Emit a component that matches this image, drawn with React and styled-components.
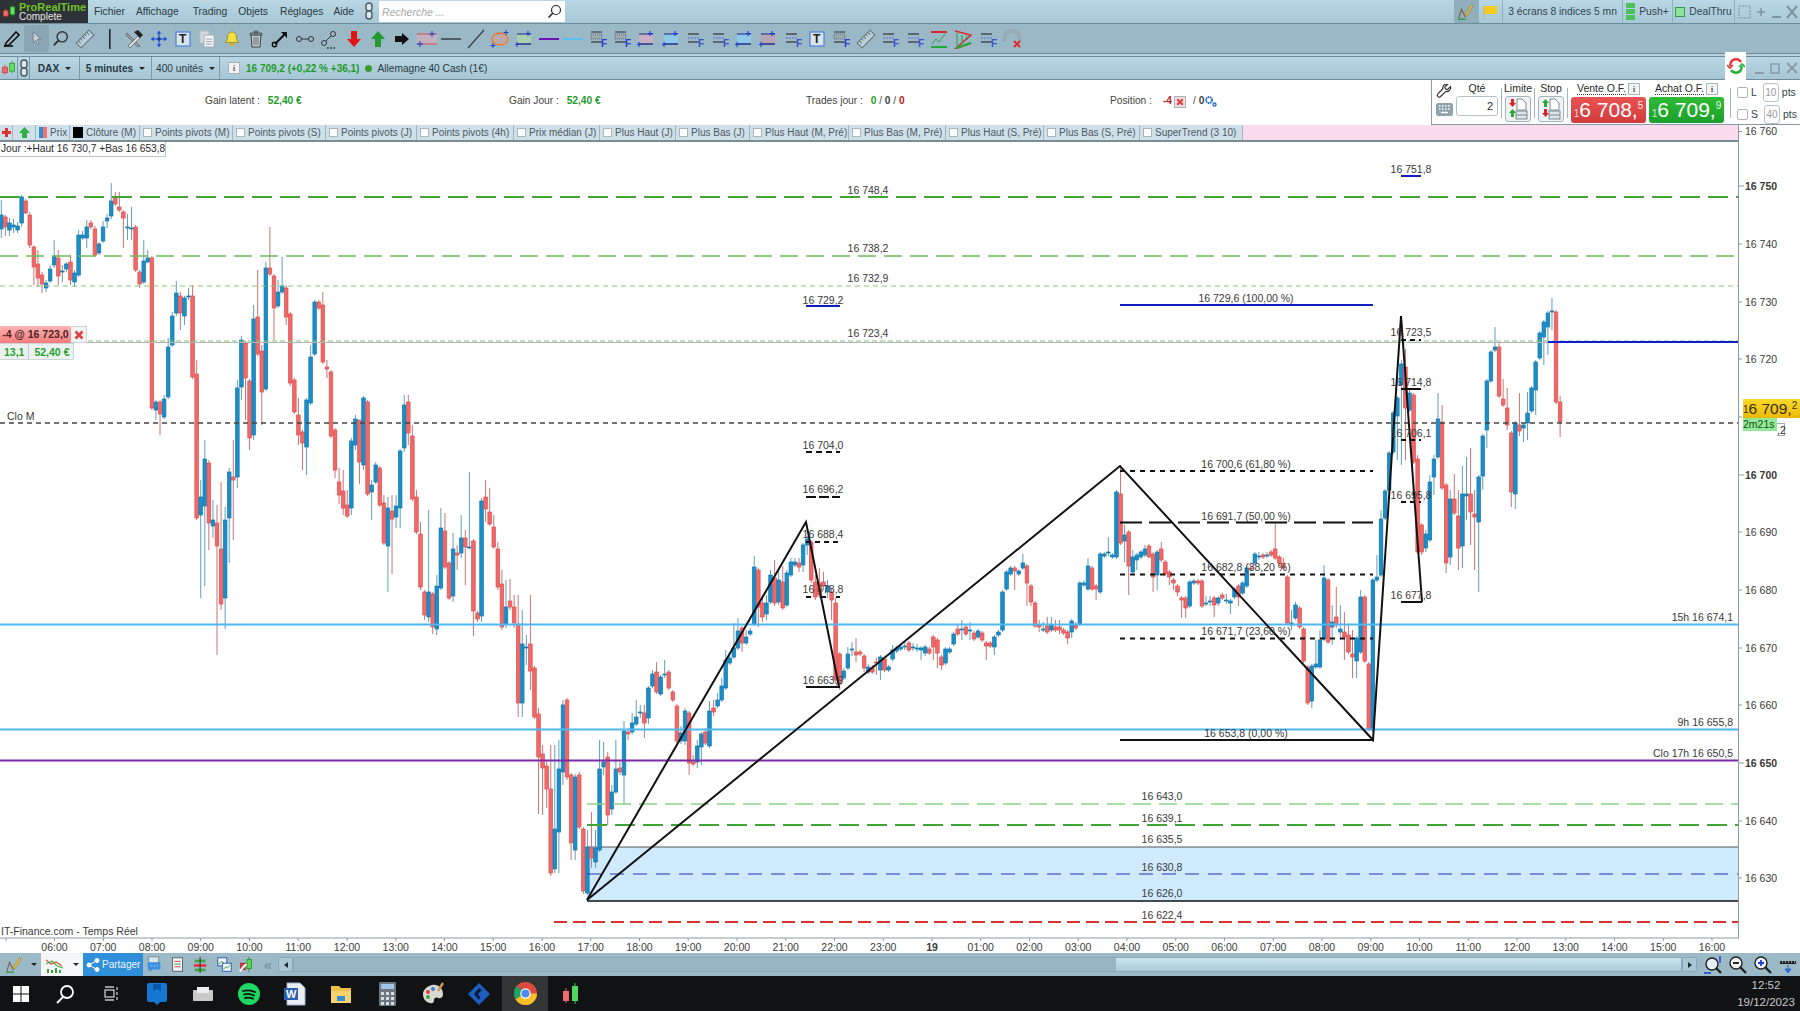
import React from 'react';
import styled, { createGlobalStyle } from 'styled-components';

const GlobalStyle = createGlobalStyle`
    html, body {
        margin: 0;
        padding: 0;
        background: #fff;
        overflow: hidden;
    }
    body {
        font-family: "Liberation Sans", Arial, sans-serif;
        font-size: 11px;
        color: #2a2a2a;
    }
`;

const Page = styled.div`
    width: 1800px;
    height: 1011px;
    display: flex;
    flex-direction: column;
    overflow: hidden;
`;

/////////////// top menu

const MenuBar = styled.div`
    height: 23px;
    flex: none;
    display: flex;
    align-items: center;
    background: linear-gradient(#b9d7e4, #a6c8d7);
    border-bottom: 1px solid #6f8b99;
    color: #2b3a42;
`;

const Logo = styled.div`
    width: 88px;
    height: 23px;
    background: #2d3236;
    display: flex;
    align-items: center;
    gap: 2px;
    padding-left: 2px;
    box-sizing: border-box;
    line-height: 10px;
    .name { color: #6fc02c; font-weight: bold; font-size: 11px; }
    .sub { color: #e8e8e8; font-size: 10px; }
`;

const MenuItem = styled.div`
    margin-left: ${p => p.$ml}px;
    font-size: 10.3px;
`;

const SearchBox = styled.div`
    width: 186px;
    height: 21px;
    background: #fff;
    display: flex;
    align-items: center;
    justify-content: space-between;
    padding: 0 3px;
    box-sizing: border-box;
    color: #aaa;
    font-style: italic;
    font-size: 10.5px;
`;

const Spacer = styled.div`
    flex: 1;
`;

const RightCell = styled.div`
    height: 23px;
    display: flex;
    align-items: center;
    gap: 4px;
    width: ${p => p.$w}px;
    justify-content: center;
    box-sizing: border-box;
    border-right: 1px solid #8fb0bf;
    background: ${p => p.$dark ? '#91aebc' : 'transparent'};
    font-size: 10.3px;
    color: #33444c;
`;

/////////////// toolbar

const ToolBar = styled.div`
    height: 29px;
    flex: none;
    display: flex;
    align-items: center;
    background: #9bb8c6;
    border-bottom: 1px solid #6f8b99;
`;

const ToolSlot = styled.div`
    width: 24.4px;
    height: 27px;
    flex: none;
    display: flex;
    align-items: center;
    justify-content: center;
    border-radius: 2px;
    background: ${p => p.$active ? '#8aa5b3' : 'transparent'};
`;

const Strip = styled.div`
    height: 2px;
    flex: none;
    background: #b8d3df;
`;

/////////////// chart title

const TitleBar = styled.div`
    height: 24px;
    flex: none;
    display: flex;
    align-items: center;
    box-sizing: border-box;
    background: linear-gradient(#b9d7e4, #a4c6d5);
    border-top: 1px solid #6f8b99;
    border-bottom: 1px solid #6f8b99;
    font-size: 10.2px;
    color: #2b3a42;
`;

const TitleCell = styled.div`
    width: ${p => p.$w}px;
    height: 22px;
    flex: none;
    display: flex;
    align-items: center;
    justify-content: center;
    gap: 6px;
    box-sizing: border-box;
    border-right: 1px solid #7e9aa8;
    font-weight: ${p => p.$bold ? 'bold' : 'normal'};
`;

const Caret = styled.span`
    width: 0;
    height: 0;
    border-left: 3px solid transparent;
    border-right: 3px solid transparent;
    border-top: 3px solid #222;
`;

const InfoBox = styled.span`
    width: ${p => p.$s || 10}px;
    height: ${p => p.$s || 10}px;
    border: 1px solid #a8b4ba;
    background: #f2f4f5;
    color: #666;
    font: bold 9px "Liberation Serif", serif;
    display: inline-flex;
    align-items: center;
    justify-content: center;
    flex: none;
`;

const Quote = styled.div`
    color: #1f9a2a;
    font-weight: bold;
    margin-left: 6px;
    font-size: 10px;
`;

const GreenDot = styled.span`
    width: 7px;
    height: 7px;
    border-radius: 50%;
    background: #3b9c2c;
    margin: 0 5px 0 6px;
`;

const RefreshTab = styled.div`
    width: 21px;
    height: 28px;
    margin-top: -5px;
    background: #fff;
    display: flex;
    align-items: center;
    justify-content: center;
    position: relative;
`;

const WinControls = styled.div`
    display: flex;
    align-items: center;
    gap: 4px;
    margin-left: 8px;
    color: #8a9ba4;
`;

/////////////// order panel

const OrderPanel = styled.div`
    height: 45px;
    flex: none;
    display: flex;
    background: #fff;
`;

const Stats = styled.div`
    width: 1431px;
    flex: none;
    padding: 15px 0 0 205px;
    box-sizing: border-box;
    display: flex;
    font-size: 10.2px;
    color: #444;
`;

const Stat = styled.div`
    width: ${p => p.$w}px;
    flex: none;
    b { margin-left: 5px; }
`;

const PositionStat = styled(Stat)`
    display: flex;
    align-items: flex-start;
`;

const Good = styled.b`
    color: #1f9a2a;
    font-weight: bold;
`;

const Bad = styled.b`
    color: #b52222;
    font-weight: bold;
`;

const TradeBox = styled.div`
    flex: 1;
    border-left: 1px solid #8a9ba4;
    border-bottom: 1px solid #8a9ba4;
    display: flex;
    box-sizing: border-box;
    padding-left: 3px;
    font-size: 10.5px;
`;

const ToolsCol = styled.div`
    width: 18px;
    margin-right: 3px;
    display: flex;
    flex-direction: column;
    align-items: center;
    gap: 2px;
    padding-top: 4px;
`;

const Keyboard = styled.div`
    width: 17px;
    height: 13px;
    background: #8fa3ad;
    border-radius: 2px;
    display: flex;
    align-items: center;
    justify-content: center;
`;

const FieldCol = styled.div`
    width: ${p => p.$w}px;
    flex: none;
    display: flex;
    flex-direction: column;
    align-items: center;
    gap: 2px;
    padding-top: 2px;
    box-sizing: border-box;
`;

const Qty = styled.div`
    width: 42px;
    height: 20px;
    border: 1px solid #b5c2c9;
    border-radius: 3px;
    box-sizing: border-box;
    text-align: right;
    padding: 3px 4px 0 0;
    font-size: 11px;
`;

const OrderBtn = styled.div`
    width: 26px;
    height: 26px;
    border: 1px solid #a5b4bc;
    border-radius: 3px;
    background: #f0f4f6;
    box-sizing: border-box;
    display: flex;
    align-items: center;
    justify-content: center;
`;

const VSep = styled.div`
    width: 1px;
    height: 30px;
    margin: 8px 3px 0 3px;
    background: #a8b4ba;
    flex: none;
`;

const PriceCol = styled.div`
    width: 75px;
    margin-right: 3px;
    flex: none;
    display: flex;
    flex-direction: column;
    align-items: center;
`;

const PriceHead = styled.div`
    height: 17px;
    display: flex;
    align-items: center;
    gap: 2px;
    white-space: nowrap;
    span:first-child { border-bottom: 1px dotted #333; }
`;

const PriceBtn = styled.div`
    width: 75px;
    height: 26px;
    border-radius: 3px;
    background: ${p => p.$sell ? 'linear-gradient(#ea5353, #cf3b3b)' : 'linear-gradient(#2fbb35, #1c9f2b)'};
    color: #fff;
    display: flex;
    align-items: center;
    justify-content: center;
    white-space: nowrap;
    font-size: 21px;
    line-height: 26px;
    small { font-size: 10px; opacity: .75; align-self: flex-end; line-height: 18px; }
    sup { font-size: 10px; opacity: .9; line-height: 10px; align-self: flex-start; margin-top: 4px; }
`;

const SideCol = styled.div`
    display: flex;
    flex-direction: column;
    margin-left: 3px;
    gap: 2px;
    padding-top: 2px;
`;

const SideRow = styled.div`
    display: flex;
    align-items: center;
    gap: 3px;
    height: 20px;
    color: #33444c;
`;

const Check = styled.span`
    width: ${p => p.$s || 10}px;
    height: ${p => p.$s || 10}px;
    border: 1px solid ${p => p.$c || '#aab5bb'};
    border-radius: ${p => p.$r || 0}px;
    background: ${p => p.$bg || '#fff'};
    flex: none;
    box-sizing: border-box;
`;

const PtsBox = styled.span`
    width: 16px;
    height: 19px;
    border: 1px solid #b5c2c9;
    border-radius: 3px;
    box-sizing: border-box;
    display: flex;
    align-items: center;
    justify-content: center;
    color: #999;
    font-size: 10px;
    margin-left: 3px;
`;

/////////////// indicators row

const IndicatorBar = styled.div`
    height: 17px;
    flex: 1;
    display: flex;
    box-sizing: border-box;
    border-bottom: 2px solid #7b8c95;
    background: #fbdcee;
`;

const IndCell = styled.div`
    width: ${p => p.$w}px;
    flex: none;
    display: flex;
    align-items: center;
    gap: 3px;
    padding-left: ${p => p.$pl ?? 3}px;
    box-sizing: border-box;
    background: #cfe0ea;
    border-right: 1px solid #9fb4c0;
    color: #4e5a61;
    font-size: 10px;
    white-space: nowrap;
    overflow: hidden;
`;

const ColorSwatch = styled.span`
    width: ${p => p.$w || 10}px;
    height: 11px;
    flex: none;
    background: ${p => p.$bg};
`;

const AxisEdge = styled.div`
    width: 62px;
    height: 17px;
    flex: none;
    box-sizing: border-box;
    border-left: 1px solid #8a9ba4;
    display: flex;
    gap: 3px;
    line-height: 12px;
    font-size: 10.5px;
    color: #3a3a3a;
    i {
        width: 3px;
        height: 1px;
        margin-top: 6px;
        background: #8a9ba4;
    }
`;

const IndRow = styled.div`
    display: flex;
    height: 17px;
    flex: none;
`;

/////////////// chart

const ChartArea = styled.div`
    height: 811px;
    flex: none;
    position: relative;
    background: #fff;
`;

const ChartSvg = styled.svg`
    display: block;
    width: 1800px;
    height: 811px;
`;

const ChartText = styled.text`
    font-family: "Liberation Sans", Arial, sans-serif;
    font-size: 10.5px;
    fill: ${p => p.$c || '#3a3a3a'};
    font-weight: ${p => p.$bold ? 'bold' : 'normal'};
`;

const JourLabel = styled.div`
    position: absolute;
    top: 0;
    left: 0;
    width: 166px;
    height: 15px;
    box-sizing: border-box;
    border: 1px solid #b8c4ca;
    border-width: 0 1px 1px 0;
    background: #fff;
    font-size: 10.2px;
    line-height: 14px;
    padding-left: 1px;
    white-space: nowrap;
`;

const PositionTag = styled.div`
    position: absolute;
    top: 184px;
    left: 0;
    display: flex;
    height: 17px;
    font-size: 10.5px;
    font-weight: bold;
    line-height: 17px;
    color: #4a2222;
    .qty {
        width: 71px;
        background: linear-gradient(#ffb3b3, #f47c7c);
        text-align: center;
        border-radius: 0 2px 2px 0;
    }
    .close {
        width: 16px;
        background: #f1f3f4;
        border: 1px solid #ccd4d8;
        border-left: 0;
        box-sizing: border-box;
        display: flex;
        align-items: center;
        justify-content: center;
    }
`;

const PositionGain = styled.div`
    position: absolute;
    top: 201px;
    left: 0;
    display: flex;
    height: 17px;
    line-height: 16px;
    font-size: 10.5px;
    font-weight: bold;
    color: #22a32c;
    background: #eef1f2;
    border: 1px solid #ccd4d8;
    border-left: 0;
    border-radius: 0 0 2px 0;
    box-sizing: border-box;
    span { padding: 0 4px; }
    span + span { border-left: 1px solid #c4ccd0; padding: 0 4px 0 5px; }
`;

const LastPrice = styled.div`
    position: absolute;
    top: 257px;
    left: 1743px;
    width: 57px;
    height: 19px;
    background: linear-gradient(#f8d92a, #ecb90a);
    color: #3a3000;
    display: flex;
    align-items: center;
    white-space: nowrap;
    font-size: 15.5px;
    line-height: 19px;
    z-index: 2;
    small { font-size: 10px; align-self: flex-end; line-height: 16px; }
    sup { font-size: 10px; line-height: 10px; align-self: flex-start; margin-top: 2px; }
`;

const Countdown = styled.div`
    position: absolute;
    top: 276px;
    left: 1743px;
    width: 34px;
    height: 13px;
    background: #93ea96;
    color: #1a4a20;
    font-size: 10.5px;
    line-height: 12px;
    overflow: hidden;
    z-index: 2;
`;

const GhostPrice = styled.div`
    position: absolute;
    top: 281px;
    left: 1777px;
    width: 8px;
    height: 13px;
    box-sizing: border-box;
    border: 1px solid #9fb0ba;
    border-left: 0;
    text-align: right;
    font-size: 10.5px;
    line-height: 12px;
`;

/////////////// bottom bar

const BottomBar = styled.div`
    height: 23px;
    flex: none;
    display: flex;
    align-items: center;
    background: #9cb9c7;
`;

const BottomCell = styled.div`
    width: ${p => p.$w}px;
    height: 23px;
    flex: none;
    display: flex;
    align-items: center;
    justify-content: center;
    background: ${p => p.$bg || 'transparent'};
    margin-left: ${p => p.$ml || 0}px;
    color: #6e8694;
    font-size: 14px;
`;

const ShareBtn = styled.div`
    width: 60px;
    height: 23px;
    flex: none;
    display: flex;
    align-items: center;
    gap: 2px;
    padding-left: 3px;
    box-sizing: border-box;
    background: #2f8fd8;
    color: #e8f4fc;
    font-size: 10px;
`;

const Track = styled.div`
    flex: 1;
    height: 15px;
    display: flex;
    box-sizing: border-box;
    background: #98b5c3;
    border: 1px solid #8ca9b7;
    border-radius: 2px;
`;

const Thumb = styled.div`
    width: 565px;
    margin-left: auto;
    background: linear-gradient(#cbe3ee, #a9ccda);
`;

const ScrollBtn = styled.div`
    width: 15px;
    height: 15px;
    flex: none;
    background: #a9c6d4;
    border: 1px solid #8ca9b7;
    box-sizing: border-box;
    border-radius: 2px;
    display: flex;
    align-items: center;
    justify-content: center;
`;

const Arrow = styled.span`
    width: 0;
    height: 0;
    border-top: 3px solid transparent;
    border-bottom: 3px solid transparent;
    border-${p => p.$dir}: 4px solid #1d2a30;
`;

const TaskBar = styled.div`
    height: 35px;
    flex: none;
    background: #111213;
    display: flex;
    align-items: center;
`;

const TaskTile = styled.div`
    width: ${p => p.$w || 46}px;
    height: 35px;
    flex: none;
    display: flex;
    align-items: center;
    justify-content: center;
    background: ${p => p.$on ? '#343536' : 'transparent'};
`;

const Clock = styled.div`
    margin-left: auto;
    width: 62px;
    text-align: center;
    color: #c9c9c9;
    font-size: 11.5px;
    line-height: 17px;
    padding-right: 3px;
`;

/////////////// data

const CANDLE_DATA = `
b215,229,200,238 r217,227,215,236 b223,230,218,236 b225,227,219,233 b226,230,222,233 b197,223,195,227 r201,213,199,214 r215,245,212,248 r247,267,245,285 r264,278,250,287
r275,284,272,293 b283,288,280,292 b269,281,265,283 b256,265,240,268 r258,276,250,285 b271,271,265,282 b264,269,262,272 r262,280,255,285 b273,282,270,287 b235,275,230,277
b235,238,231,240 b227,238,220,248 r223,227,220,229 r229,255,226,257 b244,253,242,255 b227,241,221,243 b218,221,214,228 b201,216,183,219 r197,204,192,206 r207,210,192,212
r212,218,210,248 b227,227,214,240 b228,228,207,240 r227,270,225,272 r272,284,270,288 b261,282,240,284 b258,262,250,263 r258,408,256,410 b402,410,400,420 r402,414,400,435
b399,417,395,419 b347,397,338,399 b316,345,312,347 b293,313,281,316 r296,313,292,330 b298,316,296,325 b296,296,288,300 r296,377,285,379 r374,518,360,520 b497,515,480,598
b459,506,440,586 r463,523,460,550 b520,526,500,538 r523,546,505,655 r549,604,482,610 b520,598,507,629 b472,518,468,563 r477,480,440,540 b388,477,380,488 b340,387,336,400
r343,378,341,420 r381,438,379,450 b319,435,305,440 r317,354,270,356 r351,392,345,425 b268,389,262,391 r268,274,227,276 r276,308,274,340 b292,306,280,308 b286,292,257,294
r288,317,285,325 r314,383,312,386 r380,412,378,414 r415,435,398,445 r432,443,430,470 b400,447,398,475 b357,403,345,405 b302,354,300,356 r302,308,300,310 r305,362,292,364
r367,369,360,378 r372,436,370,438 r430,470,428,478 r482,495,468,504 r491,508,470,515 r505,516,490,518 b441,508,438,515 b419,445,415,450 r420,462,440,484 b398,465,396,470
r402,494,400,496 b485,492,480,520 b465,482,462,484 r468,505,466,507 r503,543,495,545 b508,546,497,592 r511,519,495,574 b506,517,495,528 b451,508,449,528 b405,448,395,452
r402,433,395,445 r436,499,425,501 r497,532,490,534 r534,587,522,590 r592,615,590,620 b592,617,510,622 r594,627,592,634 b586,629,575,635 b528,588,508,590 r531,567,513,569
r563,598,561,600 b549,596,533,602 r553,555,545,570 b538,553,515,558 r538,547,530,585 b547,547,472,549 r541,611,539,636 r613,619,611,622 b501,616,498,622 r497,509,480,522
r512,524,488,526 r527,547,515,549 r549,587,542,590 r584,627,570,630 b607,624,580,628 r601,607,579,610 r607,623,595,628 r624,703,595,717 b644,703,610,717 b647,647,635,665
r644,671,595,690 r668,717,666,719 r714,757,708,814 r754,768,745,815 r766,789,760,808 r789,873,745,876 b829,869,745,873 b769,832,740,873 b705,772,700,785 r700,777,698,780
r775,843,773,860 b777,850,774,860 r775,827,772,829 r829,891,827,894 b847,893,830,895 r848,858,812,868 b848,862,830,868 b769,850,740,852 b762,767,742,775 r757,815,752,825
b792,809,785,815 b769,792,740,794 r768,772,762,775 b731,775,721,805 r732,734,728,740 b723,732,713,734 b717,724,700,726 b712,712,705,718 r713,723,705,738 b688,718,686,724
b674,686,670,688 r672,692,662,694 b677,694,675,696 b674,674,660,678 r672,688,670,690 r692,700,690,702 r706,741,704,743 b733,741,726,744 b711,741,708,745 r713,763,711,775
r762,764,755,766 b746,762,740,768 b734,747,732,765 r732,743,728,745 b711,746,701,748 r708,712,700,716 b700,706,693,708 b686,700,678,702 b660,688,650,690 b658,663,655,665
b648,657,623,659 b631,648,618,650 r628,643,626,652 b637,643,630,645 b631,634,628,636 b567,624,556,626 r570,607,568,627 r603,617,598,622 b603,614,595,620 b575,602,570,604
r578,603,560,606 b580,602,568,605 r582,608,566,610 b573,605,570,607 b562,575,558,577 b562,565,558,567 r563,567,558,572 b545,565,543,572 b539,545,536,555 r542,580,540,583
r582,597,575,600 r583,595,568,598 r582,586,572,590 b586,592,580,598 r592,600,588,620 r603,680,598,683 r654,684,652,690 b671,678,668,680 b654,668,647,670 b649,649,642,656
r652,655,638,662 r652,654,650,656 r656,668,654,672 b667,672,664,674 r668,672,665,674 r662,663,658,675 b657,670,655,680 r659,670,657,672 b667,670,665,672 b650,659,645,661
b648,651,646,653 b647,649,645,651 b646,646,642,650 r643,650,641,652 b647,647,643,651 b648,648,644,652 b648,650,646,660 b647,653,645,656 r649,653,647,655 r637,647,635,660
r640,653,638,668 r657,665,655,670 b649,663,647,665 b649,652,647,654 b634,644,632,646 r629,634,625,636 b629,629,620,640 r627,634,625,636 b630,630,622,640 r633,639,631,641
b631,637,629,639 r633,640,631,642 r643,646,641,660 r643,646,641,648 b637,647,635,655 b632,635,630,637 b592,630,590,632 b572,589,570,591 b568,574,566,576 r568,571,566,590
b571,574,569,576 b563,568,554,570 r566,583,564,606 r586,602,584,606 r603,626,601,628 r625,627,620,632 b629,629,622,632 r626,632,617,634 b625,630,617,632 r627,630,620,632
r627,630,620,634 r630,633,628,635 r632,638,630,644 b621,632,619,638 r625,628,622,630 b583,624,581,626 b583,585,580,587 b566,589,558,591 r568,589,566,591 r586,589,584,600
b554,592,552,594 b554,556,552,558 b552,552,537,556 b555,557,553,559 b492,557,490,559 r494,543,465,545 b535,541,525,562 r532,566,530,595 b557,572,550,574 b555,560,553,570
b552,557,550,559 b549,555,545,557 r546,557,544,558 r554,577,552,592 b552,575,550,590 r549,560,542,562 r562,574,560,576 r572,577,570,585 r580,583,578,590 r586,592,584,596
r598,600,596,618 r598,608,596,618 b582,606,580,608 b581,583,579,585 r581,583,579,585 r581,606,579,608 b603,603,596,606 b601,601,596,606 r598,605,596,617 b598,603,596,606
r595,598,593,600 b600,600,594,604 b601,603,599,614 b589,597,587,599 r586,597,584,606 b583,593,581,595 b568,586,566,588 r568,569,564,571 b554,563,552,565 b556,556,552,560
r555,557,553,559 b555,555,552,558 r552,555,550,557 r549,558,523,560 r557,563,555,566 r563,568,558,570 r577,623,575,625 b623,625,610,630 b605,618,602,620 r608,627,606,629
r629,661,627,663 r667,703,665,705 b666,701,664,708 b664,667,640,669 b640,667,630,669 b578,639,565,641 r580,642,578,644 b622,627,605,645 r617,625,587,628 b629,632,605,640
r632,637,612,660 r635,652,625,654 r654,657,630,678 b638,661,636,678 b597,652,590,654 r597,661,595,663 r664,729,662,731 b580,730,578,732 b577,580,555,582 b519,575,510,577
b491,518,489,520 b453,490,451,492 b413,452,411,454 b398,416,396,460 b364,385,360,465 r367,408,349,460 b393,410,388,412 r395,462,393,464 r459,552,455,554 r525,552,523,555
b534,548,530,552 b482,540,475,542 b459,477,455,495 b419,457,393,459 r422,488,405,490 r485,563,483,573 b499,557,490,565 r499,513,474,515 r516,548,490,570 b494,546,466,568
b494,496,457,520 r494,512,448,545 r514,517,490,570 b477,522,475,592 b436,476,434,490 b381,430,379,448 b352,381,350,383 b347,350,327,352 r347,396,342,398 r399,405,379,407
r408,425,388,430 r433,492,431,507 b423,494,421,509 r425,431,393,436 b425,428,423,442 b413,423,392,440 b388,411,386,413 b362,390,360,415 b333,358,331,360 b322,337,320,365
b313,327,311,355 b311,311,298,330 r312,402,310,404 r402,422,396,437
`;

const CANDLES = CANDLE_DATA.trim().split(/\s+/).map((tok, i) => {
    const [top, bottom, high, low] = tok.slice(1).split(',').map(Number);
    return { up: tok[0] === 'b', top, bottom, high, low, x: 1.3 + i * 4.07 };
});

const HLINES = [
    { y: 197, x1: 0, x2: 1738, color: '#3fa535', w: 2, dash: '20 8' },
    { y: 256, x1: 0, x2: 1738, color: '#6dbb5c', w: 1.4, dash: '18 8' },
    { y: 286, x1: 0, x2: 1738, color: '#82c873', w: 1.2, dash: '5 4' },
    { y: 342.5, x1: 0, x2: 1738, color: '#b5b5b5', w: 1 },
    { y: 341, x1: 88, x2: 1738, color: '#82c873', w: 1.2, dash: '5 3' },
    { y: 423, x1: 0, x2: 1738, color: '#444', w: 1.3, dash: '5 4' },
    { y: 624.5, x1: 0, x2: 1738, color: '#4db8f2', w: 2 },
    { y: 729.5, x1: 0, x2: 1738, color: '#4db8f2', w: 2 },
    { y: 760.5, x1: 0, x2: 1738, color: '#7c2aa5', w: 2 },
    { y: 804, x1: 587, x2: 1738, color: '#8fd18a', w: 1.4, dash: '18 8' },
    { y: 825, x1: 587, x2: 1738, color: '#3fa535', w: 2, dash: '20 8' },
    { y: 874, x1: 587, x2: 1738, color: '#2233b5', w: 1.2, dash: '14 9' },
    { y: 922, x1: 554, x2: 1738, color: '#d63333', w: 2, dash: '13 6' },
    { y: 342, x1: 1548, x2: 1738, color: '#1020d0', w: 2 },
    // retracement lines
    { y: 305, x1: 1120, x2: 1373, color: '#1020c0', w: 2 },
    { y: 471, x1: 1120, x2: 1373, color: '#111', w: 2, dash: '5 5' },
    { y: 522.5, x1: 1120, x2: 1373, color: '#111', w: 2, dash: '22 7' },
    { y: 574.5, x1: 1120, x2: 1373, color: '#111', w: 2, dash: '5 5' },
    { y: 638.5, x1: 1120, x2: 1373, color: '#111', w: 2, dash: '5 5' },
    { y: 740, x1: 1120, x2: 1373, color: '#111', w: 2 },
    // short levels
    { y: 306, x1: 806, x2: 840, color: '#1020c0', w: 2 },
    { y: 452, x1: 806, x2: 840, color: '#111', w: 2, dash: '6 4' },
    { y: 497, x1: 806, x2: 840, color: '#111', w: 2, dash: '10 3' },
    { y: 542, x1: 806, x2: 840, color: '#111', w: 2, dash: '5 4' },
    { y: 597, x1: 806, x2: 840, color: '#111', w: 2, dash: '5 10' },
    { y: 687, x1: 806, x2: 840, color: '#111', w: 2 },
    { y: 176, x1: 1401, x2: 1421, color: '#1020c0', w: 2 },
    { y: 340, x1: 1401, x2: 1421, color: '#111', w: 2, dash: '5 4' },
    { y: 389, x1: 1401, x2: 1421, color: '#111', w: 2 },
    { y: 440, x1: 1401, x2: 1421, color: '#111', w: 2, dash: '5 4' },
    { y: 502, x1: 1401, x2: 1421, color: '#111', w: 2, dash: '5 4' },
    { y: 602, x1: 1401, x2: 1422, color: '#111', w: 2 },
];

const ZIGZAG = [
    '587,900 806,522 839,687',
    '587,900 1120,466 1373,740 1401,316 1422,602',
];

const LABELS = [
    // centre x, baseline y, text
    [868, 194, '16 748,4'], [868, 252, '16 738,2'], [868, 282, '16 732,9'], [868, 337, '16 723,4'],
    [823, 304, '16 729,2'], [823, 449, '16 704,0'], [823, 493, '16 696,2'], [823, 538, '16 688,4'],
    [823, 593, '16 678,8'], [823, 684, '16 663,9'],
    [1246, 302, '16 729,6 (100,00 %)'], [1246, 468, '16 700,6 (61,80 %)'], [1246, 520, '16 691,7 (50,00 %)'],
    [1246, 571, '16 682,8 (38,20 %)'], [1246, 635, '16 671,7 (23,60 %)'], [1246, 737, '16 653,8 (0,00 %)'],
    [1411, 173, '16 751,8'], [1411, 336, '16 723,5'], [1411, 386, '16 714,8'], [1411, 437, '16 706,1'],
    [1411, 499, '16 695,8'], [1411, 599, '16 677,8'],
    [1162, 800, '16 643,0'], [1162, 822, '16 639,1'], [1162, 843, '16 635,5'], [1162, 871, '16 630,8'],
    [1162, 897, '16 626,0'], [1162, 919, '16 622,4'],
];

const RIGHT_LABELS = [
    [1733, 621, '15h 16 674,1'],
    [1733, 726, '9h 16 655,8'],
    [1733, 757, 'Clo 17h 16 650,5'],
];

const PRICE_TICKS = [
    [16750, 186], [16740, 244], [16730, 302], [16720, 359], [16710, 417],
    [16700, 475], [16690, 532], [16680, 590], [16670, 648], [16660, 705], [16650, 763],
    [16640, 821], [16630, 878],
];

const HOURS = ['06:00','07:00','08:00','09:00','10:00','11:00','12:00','13:00','14:00','15:00','16:00','17:00','18:00','19:00','20:00','21:00','22:00','23:00','19','01:00','02:00','03:00','04:00','05:00','06:00','07:00','08:00','09:00','10:00','11:00','12:00','13:00','14:00','15:00','16:00'];

const fmtPrice = (p) => `${String(p).slice(0, 2)} ${String(p).slice(2)}`;

const Candle = ({ c }) => {
    const wick = c.up ? '#5e9fbb' : '#cc7373';
    const fill = c.up ? '#1a8ecb' : '#f26868';
    const edge = c.up ? '#1777a6' : '#d95252';
    return (
        <g>
            <line x1={c.x} x2={c.x} y1={c.high} y2={c.low} stroke={wick} strokeWidth="1" />
            <rect x={c.x - 1.8} y={c.top} width="3.6" height={Math.max(c.bottom - c.top, 1)} fill={fill} stroke={edge} strokeWidth="0.7" />
        </g>
    );
};

const PriceChart = () => (
    <ChartSvg viewBox="0 142 1800 811">
        <rect x="587" y="847" width="1151" height="54" fill="#cfeafc" />
        <line x1="587" x2="1738" y1="847" y2="847" stroke="#555" strokeWidth="1" />
        <line x1="587" x2="1738" y1="901" y2="901" stroke="#111" strokeWidth="1.6" />

        {CANDLES.map((c, i) => <Candle key={i} c={c} />)}

        {HLINES.map((l, i) => (
            <line key={i} x1={l.x1} x2={l.x2} y1={l.y} y2={l.y} stroke={l.color} strokeWidth={l.w} strokeDasharray={l.dash} />
        ))}

        {ZIGZAG.map((pts) => (
            <polyline key={pts} points={pts} fill="none" stroke="#111" strokeWidth="2" />
        ))}

        {LABELS.map(([x, y, t], i) => <ChartText key={i} x={x} y={y} textAnchor="middle">{t}</ChartText>)}
        {RIGHT_LABELS.map(([x, y, t]) => <ChartText key={t} x={x} y={y} textAnchor="end">{t}</ChartText>)}
        <ChartText x="7" y="420">Clo M</ChartText>
        <ChartText x="1" y="935">IT-Finance.com - Temps Réel</ChartText>

        {/* axes */}
        <line x1="1738.5" x2="1738.5" y1="142" y2="938" stroke="#8a9ba4" />
        <line x1="0" x2="1739" y1="938" y2="938" stroke="#8a9ba4" />
        {PRICE_TICKS.map(([p, y]) => {
            const strong = p % 50 === 0;
            return (
                <g key={p}>
                    <line x1="1739" x2={strong ? 1744 : 1742} y1={y} y2={y} stroke="#8a9ba4" />
                    <ChartText x="1745" y={y + 4} $bold={strong}>{fmtPrice(p)}</ChartText>
                </g>
            );
        })}
        <line x1="6" x2="6" y1="938" y2="941" stroke="#8a9ba4" />
        {HOURS.map((h, i) => {
            const x = 54.5 + i * 48.75;
            return (
                <g key={i}>
                    <line x1={x} x2={x} y1="938" y2="941" stroke="#8a9ba4" />
                    <ChartText x={x} y="951" textAnchor="middle" $bold={h === '19'}>{h}</ChartText>
                </g>
            );
        })}
    </ChartSvg>
);

/////////////// icons

const I = ({ s = 20, w, h, children }) => (
    <svg width={w || s} height={h || s} viewBox="0 0 20 20">{children}</svg>
);

const CandlePair = ({ s = 16 }) => (
    <I s={s}>
        <line x1="5" x2="5" y1="6" y2="18" stroke="#c43" />
        <rect x="2" y="9" width="6" height="7" fill="#f2686d" stroke="#c43" />
        <line x1="14" x2="14" y1="1" y2="17" stroke="#2a9a2a" />
        <rect x="11" y="4" width="6" height="10" fill="#62e35f" stroke="#2a9a2a" />
    </I>
);

const LinkChain = () => (
    <svg width="10" height="18" viewBox="0 0 10 18" fill="none" stroke="#4d5a60" strokeWidth="1.4">
        <rect x="2" y="1" width="6" height="8" rx="3" fill="#dfe8ec" />
        <rect x="2" y="9" width="6" height="8" rx="3" fill="#dfe8ec" />
    </svg>
);

const Magnifier = ({ s = 15, color = '#2b2b2b' }) => (
    <I s={s}>
        <circle cx="12" cy="8" r="6" fill="none" stroke={color} strokeWidth="1.6" />
        <line x1="8" y1="12" x2="2" y2="18" stroke={color} strokeWidth="2.2" />
    </I>
);

const Bars = ({ color = '#3b55d0' }) => (
    <g>
        <line x1="3" x2="14" y1="5" y2="5" stroke="#333" strokeWidth="1.2" />
        <line x1="3" x2="14" y1="9" y2="9" stroke="#5d6fd8" strokeWidth="1.2" strokeDasharray="2 1" />
        <line x1="3" x2="14" y1="13" y2="13" stroke="#333" strokeWidth="1.2" />
        <ChartText x="13" y="18" style={{ fontSize: 10, fontWeight: 'bold', fill: color }}>F</ChartText>
    </g>
);

const FibIcon = () => <I><Bars /></I>;

const FibBoxIcon = () => (
    <I>
        <line x1="3" x2="14" y1="3" y2="3" stroke="#333" />
        <rect x="3" y="5" width="11" height="5" fill="#9aa8b0" stroke="#445" strokeWidth=".6" strokeDasharray="1 1" />
        <line x1="3" x2="14" y1="13" y2="13" stroke="#333" strokeWidth="1.2" />
        <ChartText x="13" y="18" style={{ fontSize: 10, fontWeight: 'bold', fill: '#2a40d0' }}>F</ChartText>
    </I>
);

const RectIcon = ({ fill }) => (
    <I>
        <rect x="3" y="5" width="14" height="10" fill={fill} />
        <line x1="3" x2="17" y1="15" y2="15" stroke="#1a2a80" strokeWidth="1.4" />
        <line x1="3" x2="17" y1="5" y2="5" stroke="#1a2a80" strokeWidth="1" />
        <path d="M3 13v5M1 15.5h4M14 2v5M12 4.5h5" stroke="#1c3cd8" strokeWidth="1.1" />
    </I>
);

const TextBoxIcon = () => (
    <I>
        <rect x="3" y="3" width="14" height="14" fill="#d8e4ea" stroke="#4a80e0" strokeWidth="1.2" />
        <ChartText x="6" y="14" style={{ fontSize: 12, fontWeight: 'bold', fill: '#222' }}>T</ChartText>
    </I>
);

const TOOLS = [
    <I key="pen"><path d="M2 17h9" stroke="#111" strokeWidth="1.6" /><path d="M4 14 14 3l3 3L7 16l-4 1z" fill="none" stroke="#111" strokeWidth="1.6" /></I>,
    <I key="cursor" s={17}><path d="M6 2v13l3-3 2 5 2-1-2-5h4z" fill="#c9d2d6" stroke="#6a7a82" /></I>,
    <Magnifier key="mag" s={17} color="#333" />,
    <I key="ruler"><g transform="rotate(-45 10 10)"><rect x="1" y="6.5" width="18" height="7" fill="#bcd0da" stroke="#5f6e76" /><path d="M4 7v3M7 7v2M10 7v3M13 7v2M16 7v3" stroke="#5f6e76" /></g></I>,
    <svg key="sep" width="2" height="20"><rect width="1.6" height="20" fill="#1c2a30" /></svg>,
    <I key="tools"><path d="M3 4l13 13-2 1L2 6z" fill="#9aa2a6" stroke="#444" strokeWidth=".6" /><path d="M4 17 14 7l2 2L6 19z" fill="#d8d8d8" stroke="#444" strokeWidth=".6" /><path d="M10 3l4-2 5 5-3 3z" fill="#222" /></I>,
    <I key="move"><path d="M10 2l2.4 3h-4.8zM10 18l2.4-3h-4.8zM2 10l3-2.4v4.8zM18 10l-3-2.4v4.8z" fill="#1f55d8" /><line x1="2" x2="18" y1="10" y2="10" stroke="#1f55d8" strokeWidth="1.2" /><line x1="10" x2="10" y1="2" y2="18" stroke="#1f55d8" strokeWidth="1.2" /><circle cx="10" cy="10" r="1.8" fill="#123a9a" /></I>,
    <TextBoxIcon key="text" />,
    <I key="copy"><rect x="3" y="2" width="9" height="12" fill="#d3dadf" stroke="#b5bec4" /><rect x="7" y="6" width="10" height="12" fill="#f1f3f4" stroke="#a5aeb4" /><path d="M9 10h6M9 12.5h6M9 15h6" stroke="#8a9399" strokeWidth=".8" /></I>,
    <I key="bell"><path d="M10 3c-3.5 0-4.5 3-4.5 6 0 2-1 3.5-2.5 4.5h14c-1.5-1-2.5-2.5-2.5-4.5 0-3-1-6-4.5-6z" fill="#f7e13e" stroke="#8a7a14" strokeWidth=".7" /><circle cx="10" cy="15.5" r="1.8" fill="#d6b51e" /></I>,
    <I key="trash"><path d="M5 6h10l-1 12H6z" fill="#c8ced2" stroke="#3a3f42" /><path d="M4 4h12v2H4zM8 2h4v2H8z" fill="#8f979c" stroke="#3a3f42" strokeWidth=".7" /><path d="M8 8v8M10 8v8M12 8v8" stroke="#4b5257" strokeWidth=".8" /></I>,
    <I key="arrow"><line x1="5" y1="15" x2="15" y2="5" stroke="#111" strokeWidth="2" /><path d="M11 3h6v6z" fill="#111" /><circle cx="4.5" cy="15.5" r="2.2" fill="none" stroke="#111" strokeWidth="1.4" /></I>,
    <I key="seg"><circle cx="4" cy="10" r="2.5" fill="none" stroke="#333" /><circle cx="16" cy="10" r="2.5" fill="none" stroke="#333" /><line x1="6.5" x2="13.5" y1="10" y2="10" stroke="#333" /></I>,
    <I key="ray"><circle cx="5" cy="14" r="2.5" fill="none" stroke="#333" /><circle cx="14" cy="5" r="2.5" fill="none" stroke="#333" /><line x1="7" y1="12" x2="12" y2="7" stroke="#333" /><path d="M8 19h2M11 19h2M14 19h2" stroke="#111" /></I>,
    <I key="down"><path d="M7 2h6v8h4l-7 8-7-8h4z" fill="#e01414" /></I>,
    <I key="up"><path d="M7 18h6v-8h4l-7-8-7 8h4z" fill="#249a2e" /></I>,
    <I key="right"><path d="M3 7h7V4l7 6-7 6v-3H3z" fill="#111" /></I>,
    <I key="hbox"><rect x="0" y="5" width="20" height="10" fill="#c5b0c0" /><line x1="0" x2="20" y1="5" y2="5" stroke="#d05050" /><line x1="0" x2="20" y1="15" y2="15" stroke="#d05050" /><path d="M15 2v6M12 5h6M3 12v6M0 15h6" stroke="#1c3cd8" /></I>,
    <I key="hline"><line x1="0" x2="20" y1="10" y2="10" stroke="#3c474c" strokeWidth="1.6" /></I>,
    <I key="dline"><line x1="2" y1="19" x2="18" y2="1" stroke="#3c474c" strokeWidth="1.4" /></I>,
    <I key="ellipse"><ellipse cx="10" cy="10" rx="8" ry="6" fill="#bdaaa8" stroke="#ea7a30" strokeWidth="1.3" /><path d="M16 1v5M13.5 3.5h5M3 14v5M.5 16.5h5" stroke="#1c3cd8" /></I>,
    <RectIcon key="rect" fill="#a9d0b0" />,
    <I key="purple"><line x1="0" x2="20" y1="10" y2="10" stroke="#6f10b8" strokeWidth="2" /></I>,
    <I key="cyan"><line x1="0" x2="20" y1="10" y2="10" stroke="#58bff0" strokeWidth="2" /></I>,
    <FibBoxIcon key="f1" />, <FibBoxIcon key="f2" />,
    <RectIcon key="r1" fill="#c9aec4" />, <RectIcon key="r2" fill="#90c8ea" />,
    <FibIcon key="f3" />, <FibIcon key="f4" />,
    <RectIcon key="r3" fill="#90c8ea" />, <RectIcon key="r4" fill="#b8a4b4" />,
    <FibIcon key="f5" />, <TextBoxIcon key="text2" />,
    <FibBoxIcon key="f6" />,
    <I key="ruler2"><g transform="rotate(-45 10 10)"><rect x="1" y="6.5" width="18" height="7" fill="#bcd0da" stroke="#5f6e76" /><path d="M4 7v3M7 7v2M10 7v3M13 7v2M16 7v3" stroke="#5f6e76" /></g></I>,
    <FibIcon key="f7" />, <FibIcon key="f8" />,
    <I key="chan"><path d="M2 3h16" stroke="#d82828" strokeWidth="2" /><path d="M2 18h16" stroke="#20a838" strokeWidth="2" /><path d="M3 15l4-5 3 3 6-8" fill="none" stroke="#2aa040" /></I>,
    <I key="tri"><path d="M2 2l16 4-16 14 16-6" fill="none" stroke="#d82828" strokeWidth="1.4" /><path d="M3 19l15-5" stroke="#20a838" strokeWidth="2" /><path d="M4 4v13M9 6v9M14 7v4" stroke="#2aa040" /></I>,
    <FibIcon key="f9" />,
    <I key="wheel"><path d="M3 12a7.5 7.5 0 1 1 14 0" fill="none" stroke="#98a4aa" strokeWidth="4" strokeDasharray="1.5 .8" /><path d="M12 12l6 6M18 12l-6 6" stroke="#e03030" strokeWidth="2.2" /></I>,
];

const Cross = ({ s = 10, color = '#e04040', w = 2.6 }) => (
    <svg width={s} height={s} viewBox="0 0 10 10"><path d="M1.5 1.5l7 7M8.5 1.5l-7 7" stroke={color} strokeWidth={w} /></svg>
);

const PenChart = ({ s = 18 }) => (
    <I s={s}>
        <path d="M2 17l3-10 4 8 2-4" fill="none" stroke="#7a5a4a" strokeWidth="1.2" />
        <path d="M9 13 16 2l2 1-7 11-2 1z" fill="#f2c83c" stroke="#8a6a18" strokeWidth=".6" />
        <path d="M1 18h9" stroke="#2a9a3a" strokeWidth="1.4" />
    </I>
);

const Gears = () => (
    <svg width="13" height="12" viewBox="0 0 13 12">
        <circle cx="5" cy="5" r="3" fill="none" stroke="#2c6fd0" strokeWidth="2" strokeDasharray="1.5 .6" />
        <circle cx="10.5" cy="9.5" r="1.5" fill="none" stroke="#2c6fd0" strokeWidth="1.4" />
    </svg>
);

const Wrench = ({ s = 17, color = '#333' }) => (
    <I s={s}><path d="M17 3l-3.5 3.5-2.5-.5-.5-2.5L14 0c-3-1-6.5 1.5-6 5.5L2 12c-1.5 1.5 1 4.5 3 3l6.5-6c3.5.5 6.5-2.5 5.5-6z" fill="#fff" stroke={color} strokeWidth="1.4" /></I>
);

const LimitIcon = ({ topUp }) => (
    <svg width="20" height="22" viewBox="0 0 20 22">
        <path d="M9 1h5l4 4v7H9z" fill="#fff" stroke="#7b8a92" />
        <rect x="8" y="13" width="11" height="8" fill="#dce4e8" stroke="#7b8a92" />
        <line x1="8" x2="19" y1="17" y2="17" stroke="#7b8a92" />
        <path d="M3 1h3v4h2l-3.5 4L1 5h2z" fill={topUp ? '#2aa83a' : '#dd2424'} transform={topUp ? 'rotate(180 4.5 5)' : ''} />
        <path d="M3 11h3v4h2l-3.5 4L1 15h2z" fill={topUp ? '#dd2424' : '#2aa83a'} transform={topUp ? '' : 'rotate(180 4.5 15)'} />
    </svg>
);

const SmallDoc = ({ children }) => <I s={18}>{children}</I>;

/////////////// sections

const INDICATORS = [
    ['Points pivots (M)', 93], ['Points pivots (S)', 93], ['Points pivots (J)', 91], ['Points pivots (4h)', 97],
    ['Prix médian (J)', 86], ['Plus Haut (J)', 76], ['Plus Bas (J)', 74], ['Plus Haut (M, Pré)', 99],
    ['Plus Bas (M, Pré)', 97], ['Plus Haut (S, Pré)', 98], ['Plus Bas (S, Pré)', 96], ['SuperTrend (3 10)', 103],
];

const MENU = [['Fichier', 6], ['Affichage', 11], ['Trading', 14], ['Objets', 11], ['Réglages', 12], ['Aide', 10]];

const Menu = () => (
    <MenuBar>
        <Logo>
            <CandlePair s={15} />
            <div>
                <div className="name">ProRealTime</div>
                <div className="sub">Complete</div>
            </div>
        </Logo>
        {MENU.map(([t, ml]) => <MenuItem key={t} $ml={ml}>{t}</MenuItem>)}
        <MenuItem $ml={10}><LinkChain /></MenuItem>
        <MenuItem $ml={5}>
            <SearchBox>Recherche ...<Magnifier /></SearchBox>
        </MenuItem>
        <Spacer />
        <RightCell $w={25} $dark><PenChart /></RightCell>
        <RightCell $w={24}>
            <svg width="16" height="16" viewBox="0 0 16 16"><path d="M1 2h13v8H1z" fill="#f6c91d" /><path d="M1 2v13" stroke="#c9b36a" /></svg>
        </RightCell>
        <RightCell $w={120}>3 écrans 8 indices 5 mn</RightCell>
        <RightCell $w={50}>
            <svg width="9" height="17"><rect width="9" height="5" fill="#4cc25a" /><rect y="6" width="9" height="5" fill="#4cc25a" /><rect y="12" width="9" height="5" fill="#4cc25a" /></svg>
            Push+
        </RightCell>
        <RightCell $w={62}><Check $s={10} $c="#3c9a4c" $bg="#8fe29a" />DealThru</RightCell>
        <svg width="65" height="20" viewBox="0 0 65 20" fill="none" stroke="#7f949e" strokeWidth="1.5">
            <rect x="4" y="4" width="11" height="12" strokeDasharray="2 1" strokeWidth="1" />
            <path d="M22 10h8M26 6v8" />
            <path d="M37 15h9" strokeWidth="2" />
            <path d="M52 4l10 12M62 4 52 16" strokeWidth="2" />
        </svg>
    </MenuBar>
);

const Tools = () => (
    <ToolBar>
        {TOOLS.map((t, i) => <ToolSlot key={i} $active={i === 1}>{t}</ToolSlot>)}
    </ToolBar>
);

const Title = () => (
    <TitleBar>
        <TitleCell $w={18}><CandlePair /></TitleCell>
        <TitleCell $w={12}><LinkChain /></TitleCell>
        <TitleCell $w={50}><b>DAX</b><Caret /></TitleCell>
        <TitleCell $w={72} $bold>5 minutes<Caret /></TitleCell>
        <TitleCell $w={68}>400 unités<Caret /></TitleCell>
        <InfoBox style={{ marginLeft: 8 }}>i</InfoBox>
        <Quote>16 709,2 (+0,22 % +36,1)</Quote>
        <GreenDot />
        Allemagne 40 Cash (1€)
        <Spacer />
        <RefreshTab>
            <svg width="18" height="18" viewBox="0 0 18 18" fill="none" strokeWidth="2.4">
                <path d="M14 5a6 6 0 0 0-10 0L3 9" stroke="#e23b3b" />
                <path d="M4 13a6 6 0 0 0 10 0l1-4" stroke="#28b03a" />
                <path d="M0 8l3 3 3-3" stroke="#e23b3b" strokeWidth="1.6" />
                <path d="M12 10l3-3 3 3" stroke="#28b03a" strokeWidth="1.6" />
            </svg>
        </RefreshTab>
        <WinControls>
            <svg width="46" height="14" viewBox="0 0 46 14" fill="none" stroke="#8a9ba4" strokeWidth="1.5">
                <path d="M1 12h9" strokeWidth="2" />
                <rect x="17" y="3" width="8" height="9" />
                <path d="M33 2l10 10M43 2 33 12" strokeWidth="2" />
            </svg>
        </WinControls>
    </TitleBar>
);

const Order = () => (
    <OrderPanel>
        <Stats>
            <Stat $w={304}>Gain latent : <Good>52,40 €</Good></Stat>
            <Stat $w={297}>Gain Jour : <Good>52,40 €</Good></Stat>
            <Stat $w={304}>Trades jour : <Good>0</Good> / <b style={{ margin: 0 }}>0</b> / <Bad style={{ margin: 0 }}>0</Bad></Stat>
            <PositionStat $w={200}>
                Position :<Bad style={{ marginLeft: 11 }}>-4</Bad>
                <InfoBox style={{ margin: '1px 7px 0 2px', background: '#f3dede' }}><Cross s={8} /></InfoBox>
                / <b style={{ margin: '0 0 0 3px' }}>0</b><Gears />
            </PositionStat>
        </Stats>
        <TradeBox>
            <ToolsCol>
                <Wrench />
                <Keyboard>
                    <svg width="13" height="9"><path d="M1 1h1.5M4 1h1.5M7 1h1.5M10 1h1.5M1 4h1.5M4 4h1.5M7 4h1.5M10 4h1.5M3 7.5h7" stroke="#fff" strokeWidth="1.5" /></svg>
                </Keyboard>
            </ToolsCol>
            <FieldCol $w={42}>
                Qté
                <Qty>2</Qty>
            </FieldCol>
            <VSep />
            <FieldCol $w={26}>
                Limite
                <OrderBtn><LimitIcon /></OrderBtn>
            </FieldCol>
            <VSep />
            <FieldCol $w={26}>
                Stop
                <OrderBtn><LimitIcon topUp /></OrderBtn>
            </FieldCol>
            <VSep />
            <PriceCol>
                <PriceHead><span>Vente O.F.</span><InfoBox>i</InfoBox></PriceHead>
                <PriceBtn $sell><small>1</small>6 708,<sup>5</sup></PriceBtn>
            </PriceCol>
            <PriceCol>
                <PriceHead><span>Achat O.F.</span><InfoBox>i</InfoBox></PriceHead>
                <PriceBtn><small>1</small>6 709,<sup>9</sup></PriceBtn>
            </PriceCol>
            <VSep />
            <SideCol>
                <SideRow><Check $s={11} $r={2} />L<PtsBox>10</PtsBox>pts</SideRow>
                <SideRow><Check $s={11} $r={2} />S<PtsBox>40</PtsBox>pts</SideRow>
            </SideCol>
        </TradeBox>
    </OrderPanel>
);

const Indicators = () => (
    <IndRow>
        <IndicatorBar>
            <IndCell $w={13} $pl={2}>
                <svg width="9" height="9"><path d="M3 0h3v3h3v3H6v3H3V6H0V3h3z" fill="#e03030" /></svg>
            </IndCell>
            <IndCell $w={23} $pl={6}>
                <svg width="11" height="11"><path d="M5.5 0 11 6H8v5H3V6H0z" fill="#30b040" /></svg>
            </IndCell>
            <IndCell $w={34}>
                <ColorSwatch $w={8} $bg="linear-gradient(90deg,#2a8fd0 50%,#f27070 50%)" />Prix
            </IndCell>
            <IndCell $w={70}>
                <ColorSwatch $bg="#000" />Clôture (M)
            </IndCell>
            {INDICATORS.map(([t, w]) => (
                <IndCell key={t} $w={w}><Check $s={9} />{t}</IndCell>
            ))}
        </IndicatorBar>
        <AxisEdge><i />16 760</AxisEdge>
    </IndRow>
);

const Chart = () => (
    <ChartArea>
        <PriceChart />
        <JourLabel>Jour :+Haut 16 730,7 +Bas 16 653,8</JourLabel>
        <PositionTag>
            <div className="qty">-4 @ 16 723,0</div>
            <div className="close"><Cross /></div>
        </PositionTag>
        <PositionGain><span>13,1</span><span>52,40 €</span></PositionGain>
        <GhostPrice>,2</GhostPrice>
        <Countdown>2m21s</Countdown>
        <LastPrice><small>1</small>6 709,<sup>2</sup></LastPrice>
    </ChartArea>
);

const Bottom = () => (
    <BottomBar>
        <BottomCell $w={27}><PenChart /></BottomCell>
        <BottomCell $w={14}><Caret /></BottomCell>
        <BottomCell $w={27} $bg="#f4f6f7">
            <I s={20}>
                <path d="M1 5l5 4 5-2 6 4" fill="none" stroke="#e0503a" strokeWidth="1.2" />
                <path d="M1 9l6-3 5 5 6 2" fill="none" stroke="#44b050" strokeWidth="1.2" />
                <path d="M2 14h2v4H2zM6 15h2v3H6zM10 13h2v5h-2zM14 15h2v3h-2z" fill="#3aa040" />
            </I>
        </BottomCell>
        <BottomCell $w={15} $bg="#f4f6f7"><Caret /></BottomCell>
        <ShareBtn>
            <svg width="14" height="14" viewBox="0 0 14 14" fill="#fff" stroke="#fff">
                <circle cx="11" cy="2.5" r="2" /><circle cx="3" cy="7" r="2" /><circle cx="11" cy="11.5" r="2" />
                <path d="M11 2.5 3 7l8 4.5" fill="none" />
            </svg>
            Partager
        </ShareBtn>
        <BottomCell $w={23}>
            <SmallDoc><rect x="3" y="1" width="11" height="13" fill="#dce6ec" stroke="#7d8e96" /><path d="M2 7h14v8H7l-3 3v-3H2z" fill="#3b8fe0" /><path d="M6 11h1M9 11h1M12 11h1" stroke="#fff" /></SmallDoc>
        </BottomCell>
        <BottomCell $w={23}>
            <SmallDoc><rect x="4" y="2" width="11" height="15" fill="#f2f4f5" stroke="#4f5c63" /><path d="M6 6h7M6 12h7" stroke="#c83a3a" /><path d="M6 9h7" stroke="#2aa03a" /></SmallDoc>
        </BottomCell>
        <BottomCell $w={24}>
            <SmallDoc><path d="M3 4h12v3H3z" fill="#3aa83a" /><path d="M2 9h14v3H2z" fill="#dd3a3a" /><path d="M3 14h12v3H3z" fill="#3aa83a" /><path d="M9 1v18" stroke="#222" /></SmallDoc>
        </BottomCell>
        <BottomCell $w={23}>
            <SmallDoc><rect x="2" y="2" width="10" height="9" fill="#eef3f6" stroke="#2358b0" /><rect x="7" y="8" width="10" height="9" fill="#eef3f6" stroke="#2358b0" /><path d="M3 9l3-3 3 2M8 15l3-3 2 1 3-3" fill="none" stroke="#2aa03a" /></SmallDoc>
        </BottomCell>
        <BottomCell $w={22}>
            <SmallDoc><path d="M12 1v17" stroke="#2a9a2a" /><rect x="10" y="4" width="5" height="10" fill="#55d855" stroke="#2a9a2a" /><rect x="3" y="8" width="5" height="7" fill="#e04444" stroke="#a02020" /><path d="M2 17 9 9" stroke="#fff" strokeWidth="2.4" /></SmallDoc>
        </BottomCell>
        <BottomCell $w={20}>«</BottomCell>
        <ScrollBtn><Arrow $dir="right" /></ScrollBtn>
        <Track><Thumb /></Track>
        <ScrollBtn><Arrow $dir="left" /></ScrollBtn>
        <BottomCell $w={25} $ml={3}>
            <I><circle cx="9" cy="9" r="6" fill="#e6eef2" stroke="#222" strokeWidth="1.4" /><line x1="13" y1="13" x2="18" y2="18" stroke="#222" strokeWidth="2.4" /><path d="M17 1v7M1 18h7" stroke="#1c3cd8" strokeWidth="1.4" /></I>
        </BottomCell>
        <BottomCell $w={25}>
            <I><circle cx="8" cy="8" r="6" fill="#f3f6f8" stroke="#222" strokeWidth="1.4" /><line x1="12" y1="12" x2="18" y2="18" stroke="#222" strokeWidth="2.4" /><path d="M5 8h6" stroke="#111" strokeWidth="1.8" /></I>
        </BottomCell>
        <BottomCell $w={25}>
            <I><circle cx="8" cy="8" r="6" fill="#f3f6f8" stroke="#222" strokeWidth="1.4" /><line x1="12" y1="12" x2="18" y2="18" stroke="#222" strokeWidth="2.4" /><path d="M5 8h6M8 5v6" stroke="#1c3cd8" strokeWidth="1.8" /></I>
        </BottomCell>
        <BottomCell $w={25}>
            <I><path d="M2 6h16v3H2z" fill="#222" /><path d="M4 7h1M7 7h1M10 7h1M13 7h1M16 7h1" stroke="#fff" /><path d="M10 10v4M7 14h6l-3 4z" fill="#2a68d8" stroke="#2a68d8" /></I>
        </BottomCell>
    </BottomBar>
);

const Task = () => (
    <TaskBar>
        <TaskTile $w={42}>
            <svg width="16" height="16"><path d="M0 0h7.5v7.5H0zM8.5 0H16v7.5H8.5zM0 8.5h7.5V16H0zM8.5 8.5H16V16H8.5z" fill="#fff" /></svg>
        </TaskTile>
        <TaskTile>
            <svg width="20" height="20" viewBox="0 0 20 20" fill="none" stroke="#fff" strokeWidth="1.8"><circle cx="12" cy="8" r="6" /><path d="M8 13l-6 6" strokeWidth="2" /></svg>
        </TaskTile>
        <TaskTile>
            <svg width="17" height="17" viewBox="0 0 17 17" fill="none" stroke="#c8c8c8" strokeWidth="1.3"><rect x="2" y="5" width="9" height="7" /><path d="M2 2h9M2 15h9M14 2v3M14 7v3M14 12v3" /></svg>
        </TaskTile>
        <TaskTile>
            <svg width="22" height="24" viewBox="0 0 22 24"><rect x="1" y="1" width="20" height="19" rx="2" fill="#1677d2" /><path d="M8 20l3 3 3-3z" fill="#1677d2" /><path d="M7 2h8v7l-4-2-4 2z" fill="#0b55a8" /></svg>
        </TaskTile>
        <TaskTile>
            <svg width="22" height="16" viewBox="0 0 22 16"><rect x="1" y="4" width="20" height="11" rx="1" fill="#c9c9c9" /><rect x="5" y="1" width="12" height="6" fill="#efefef" /></svg>
        </TaskTile>
        <TaskTile>
            <svg width="22" height="22" viewBox="0 0 22 22" fill="none" stroke="#111" strokeWidth="1.8" strokeLinecap="round"><circle cx="11" cy="11" r="11" fill="#1ed760" stroke="none" /><path d="M5 8c4-1 8-1 12 1M6 11.5c3-1 7-.8 10 1M7 15c3-.7 5-.5 8 .7" /></svg>
        </TaskTile>
        <TaskTile>
            <svg width="22" height="24" viewBox="0 0 22 24"><path d="M3 1h13l5 5v17H3z" fill="#e8eef6" stroke="#a0b0c8" /><rect x="0" y="6" width="14" height="12" fill="#2b5fb0" /><ChartText x="2" y="16" style={{ fontSize: 11, fontWeight: 'bold', fill: '#fff' }}>W</ChartText></svg>
        </TaskTile>
        <TaskTile>
            <svg width="22" height="20" viewBox="0 0 22 20"><path d="M1 2h8l2 2h10v15H1z" fill="#eec04b" /><path d="M1 7h20v12H1z" fill="#f4d36e" /><rect x="7" y="12" width="8" height="5" fill="#3a8fd0" /></svg>
        </TaskTile>
        <TaskTile>
            <svg width="17" height="24" viewBox="0 0 17 24"><rect width="17" height="24" rx="1" fill="#6b7680" /><rect x="2" y="2" width="13" height="5" fill="#9fc6e6" /><path d="M2 10h3v3H2zM7 10h3v3H7zM12 10h3v3h-3zM2 15h3v3H2zM7 15h3v3H7zM12 15h3v3h-3zM2 20h3v3H2zM7 20h3v3H7zM12 20h3v3h-3z" fill="#d8dde0" /></svg>
        </TaskTile>
        <TaskTile>
            <svg width="24" height="24" viewBox="0 0 24 24"><path d="M11 3c6-1 11 3 11 9 0 4-3 5-5 4s-4 0-4 2-1 4-4 3C4 20 2 16 2 12c0-4 4-8 9-9z" fill="#d8d8d0" /><circle cx="7" cy="10" r="2" fill="#e04040" /><circle cx="12" cy="7" r="2" fill="#3a80d8" /><circle cx="7" cy="15" r="2" fill="#40a040" /><path d="M17 9l5-8" stroke="#c89a50" strokeWidth="2.4" /></svg>
        </TaskTile>
        <TaskTile>
            <svg width="22" height="22" viewBox="0 0 22 22"><path d="M11 0l11 11-11 11L0 11z" fill="#1d5fc0" /><path d="M11 5l-5 6 5 6 1-3-2-3 4-4z" fill="#0b1a3a" /></svg>
        </TaskTile>
        <TaskTile $on>
            <svg width="23" height="23" viewBox="0 0 24 24">
                <circle cx="12" cy="12" r="12" fill="#dd4b3e" />
                <path d="M12 12 1.6 18A12 12 0 0 1 3 4z" fill="#1da462" />
                <path d="M12 12h12a12 12 0 0 1-12 12 12 12 0 0 1-10.4-6z" fill="#f6c026" />
                <circle cx="12" cy="12" r="5.4" fill="#fff" />
                <circle cx="12" cy="12" r="4.2" fill="#4a8af4" />
            </svg>
        </TaskTile>
        <TaskTile>
            <svg width="18" height="24" viewBox="0 0 18 24"><line x1="13" x2="13" y1="1" y2="22" stroke="#3cd050" /><rect x="10" y="4" width="6" height="15" fill="#4fd860" /><line x1="4" x2="4" y1="6" y2="21" stroke="#ec6a70" /><rect x="1" y="9" width="6" height="10" fill="#ec6a70" /></svg>
        </TaskTile>
        <Clock>12:52<br />19/12/2023</Clock>
    </TaskBar>
);

const App = () => (
    <Page>
        <GlobalStyle />
        <Menu />
        <Tools />
        <Strip />
        <Title />
        <Order />
        <Indicators />
        <Chart />
        <Bottom />
        <Task />
    </Page>
);

export default App;
